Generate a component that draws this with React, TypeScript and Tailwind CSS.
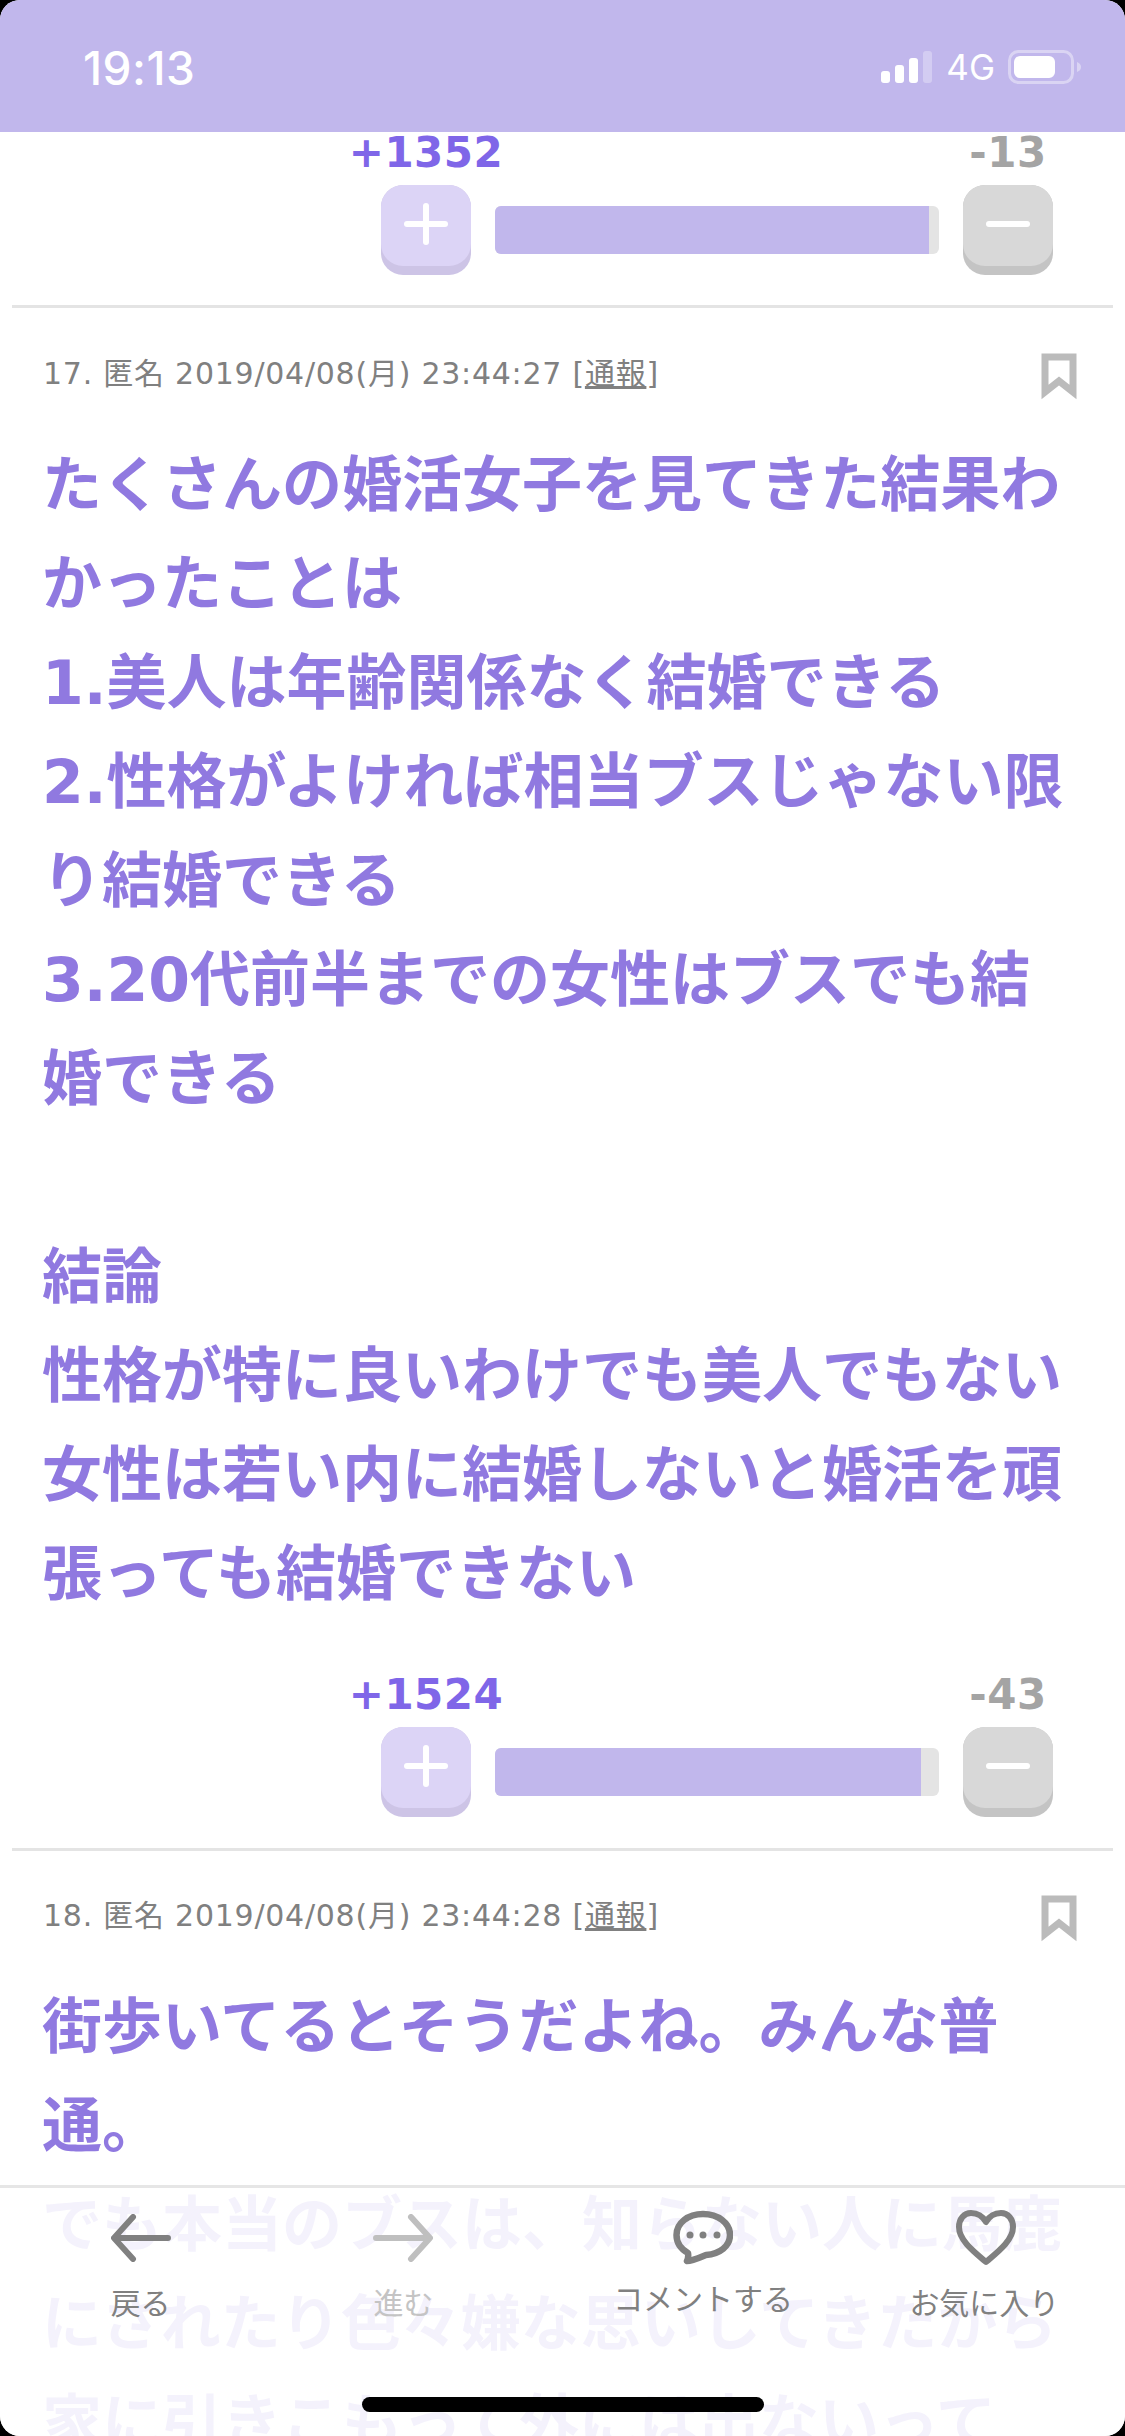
const StatusBar = () => (
  <div className="flex h-[132px] items-start justify-between bg-[#c1b7ec] pl-[83px] pr-[43px] pt-[43px] text-white">
    <span className="font-['Inter',sans-serif] text-[46px] font-medium leading-[50px] tracking-[0.5px]">19:13</span>
    <div className="flex items-center pt-[6px]">
      <svg width="52" height="33" viewBox="0 0 52 33" fill="#fff">
        <rect x="0" y="20" width="9" height="12" rx="3" />
        <rect x="14" y="14" width="9" height="18" rx="3" />
        <rect x="28" y="7" width="9" height="25" rx="3" />
        <rect x="42" y="0" width="9" height="32" rx="3" fillOpacity="0.3" />
      </svg>
      <span className="ml-[13px] font-['Inter',sans-serif] text-[35px] leading-[36px]">4G</span>
      <svg className="ml-[13px]" width="74" height="34" viewBox="0 0 74 34" fill="#fff">
        <rect x="1.5" y="1.5" width="63" height="31" rx="9" fill="none" stroke="#fff" strokeOpacity="0.4" strokeWidth="3" />
        <rect x="6" y="6" width="41" height="22" rx="6" />
        <path d="M69 12c3 1 4 3 4 5s-1 4-4 5z" fillOpacity="0.4" />
      </svg>
    </div>
  </div>
);

const VoteButton = ({ color, shadow, plus }: { color: string; shadow: string; plus?: boolean }) => (
  <div className={`relative h-[90px] w-[90px] rounded-[22px] ${shadow}`}>
    <div className={`h-[81px] w-[90px] rounded-[22px] ${color}`} />
    <div className="absolute left-[23px] top-[36px] h-[6px] w-[44px] rounded-full bg-white" />
    {plus && <div className="absolute left-[42px] top-[18px] h-[42px] w-[6px] rounded-full bg-white" />}
  </div>
);

const VoteRow = ({ up, down, percent }: { up: string; down: string; percent: number }) => (
  <div className="flex justify-end gap-[24px] pr-[72px]">
    <div className="flex w-[90px] flex-col items-center">
      <span className="h-[53px] whitespace-nowrap text-[42px] font-bold leading-[41px] tracking-[0.5px] text-[#7f66e8]">{up}</span>
      <VoteButton color="bg-[#dcd4f6]" shadow="bg-[#cdc4e6]" plus />
    </div>
    <div className="mt-[74px] h-[48px] w-[444px] overflow-hidden rounded-[6px] bg-[#e4e4e4]">
      <div className="h-full bg-[#c1b7ec]" style={{ width: `${percent}%` }} />
    </div>
    <div className="flex w-[90px] flex-col items-center">
      <span className="h-[53px] whitespace-nowrap text-[42px] font-bold leading-[41px] tracking-[0.5px] text-[#a4a4a4]">{down}</span>
      <VoteButton color="bg-[#d8d8d8]" shadow="bg-[#c4c4c4]" />
    </div>
  </div>
);

const Divider = () => <div className="mx-[12px] h-[3px] bg-[#e4e4e4]" />;

const Meta = ({ no, date }: { no: number; date: string }) => (
  <div className="flex items-start justify-between pl-[43px] pr-[48px]">
    <span className="mt-[3px] text-[30px] leading-[36px] tracking-[0.75px] text-[#808080]">
      {no}. 匿名 {date} [<span className="underline">通報</span>]
    </span>
    <svg width="36" height="47" viewBox="0 0 36 47">
      <path d="M4 4H32V39L18 28L4 39Z" fill="none" stroke="#bbbbbb" strokeWidth="7" />
    </svg>
  </div>
);

const Body = ({ children }: { children: React.ReactNode }) => (
  <div className="mt-[36px] px-[42px] text-[60px] font-bold leading-[99px] text-[#9079e0]">{children}</div>
);

const NavItem = ({ label, muted, shiftLabel, className, children }: { label: string; muted?: boolean; shiftLabel?: boolean; className?: string; children: React.ReactNode }) => (
  <div className={`flex flex-col items-center ${className ?? ''}`}>
    <div className="flex h-[56px] items-center justify-center">{children}</div>
    <span className={`whitespace-nowrap text-[30px] leading-[40px] ${muted ? 'text-[#c4c4c4]' : 'text-[#808080]'} ${shiftLabel ? 'mt-[14px]' : 'mt-[18px]'}`}>
      {label}
    </span>
  </div>
);

const Arrow = ({ flip, color }: { flip?: boolean; color: string }) => (
  <svg width="60" height="48" viewBox="0 0 60 48" fill="none" stroke={color} strokeWidth="6" strokeLinecap="round" strokeLinejoin="round" className={flip ? '-scale-x-100' : ''}>
    <path d="M57 24H4M22 3L3 24L22 45" />
  </svg>
);

const BottomNav = () => (
  <div className="absolute inset-x-0 bottom-0 h-[251px] border-t-[3px] border-[#e6e6e6] bg-white/90">
    <div className="grid grid-cols-4 pt-[22px]">
      <NavItem label="戻る"><Arrow color="#808080" /></NavItem>
      <NavItem label="進む" muted className="mr-[37px]"><Arrow flip color="#bfbfbf" /></NavItem>
      <NavItem label="コメントする" shiftLabel>
        <svg width="60" height="56" viewBox="0 0 60 56" fill="none">
          <path d="M30 4C15 4 3.500 13 3.500 25C3.500 33 8 39 15 43C15.500 46 15 49 14 51C20 51 28 47 33 45C47 44 57 36 57 25C57 13 45 4 30 4Z" stroke="#808080" strokeWidth="6.500" strokeLinejoin="round" />
          <circle cx="17" cy="25" r="3.500" fill="#808080" />
          <circle cx="30" cy="25" r="3.500" fill="#808080" />
          <circle cx="44" cy="25" r="3.500" fill="#808080" />
        </svg>
      </NavItem>
      <NavItem label="お気に入り">
        <svg className="ml-[3px]" width="60" height="56" viewBox="0 0 60 56" fill="none">
          <path d="M30 12C26 5 20 3 15 3C8 3 3 9 3 17C3 30 17 41 30 52C43 41 57 30 57 17C57 9 52 3 45 3C40 3 34 5 30 12Z" stroke="#808080" strokeWidth="6" strokeLinejoin="round" />
        </svg>
      </NavItem>
    </div>
    <div className="absolute bottom-[24px] left-[362px] h-[15px] w-[402px] rounded-full bg-black" />
  </div>
);

export default function App() {
  return (
    <div className="h-[2436px] w-[1125px] bg-black font-['DejaVu_Sans','Noto_Sans_CJK_JP',sans-serif]">
      <div className="relative h-full overflow-hidden rounded-[20px] bg-white">
        <StatusBar />

        <VoteRow up="+1352" down="-13" percent={97.7} />
        <div className="mt-[30px]"><Divider /></div>

        <div className="pt-[45px]">
          <Meta no={17} date="2019/04/08(月) 23:44:27" />
          <Body>
            たくさんの婚活女子を見てきた結果わかったことは<br />
            1.美人は年齢関係なく結婚できる<br />
            2.性格がよければ相当ブスじゃない限り結婚できる<br />
            3.20代前半までの女性はブスでも結婚できる<br />
            <br />
            結論<br />
            性格が特に良いわけでも美人でもない女性は若い内に結婚しないと婚活を頑張っても結婚できない
          </Body>
        </div>

        <div className="mt-[50px]">
          <VoteRow up="+1524" down="-43" percent={96} />
        </div>
        <div className="mt-[31px]"><Divider /></div>

        <div className="pt-[44px]">
          <Meta no={18} date="2019/04/08(月) 23:44:28" />
          <Body>
            街歩いてるとそうだよね。みんな普通。<br />
            でも本当のブスは、知らない人に馬鹿にされたり色々嫌な思いしてきたから家に引きこもって外には出ないって
          </Body>
        </div>

        <BottomNav />
      </div>
    </div>
  );
}
